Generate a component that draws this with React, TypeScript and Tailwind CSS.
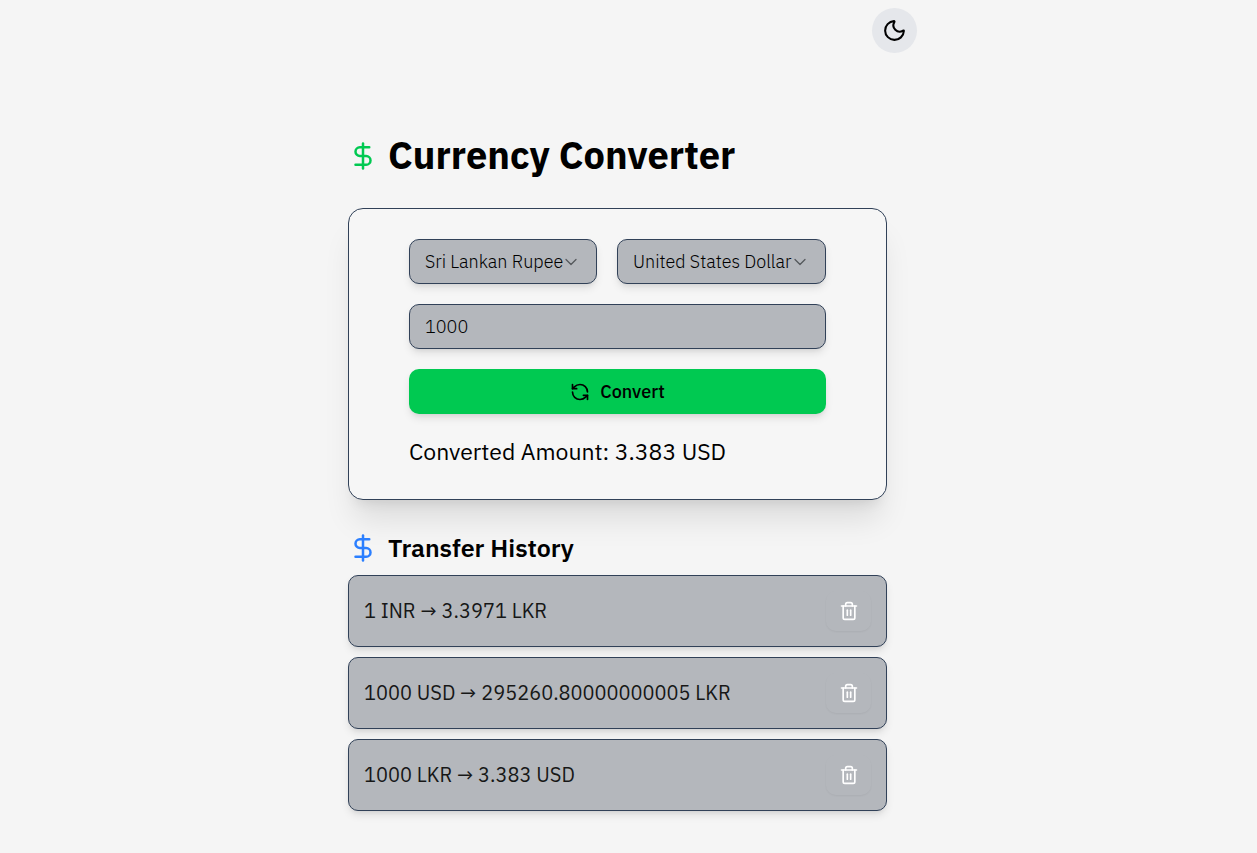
import { useState } from "react";
import { ChevronDown, DollarSign, Moon, RefreshCcw, Trash2 } from "lucide-react";

const raised = "shadow-[0_5px_8px_-1px_rgba(0,0,0,0.1),0_3px_5px_-3px_rgba(0,0,0,0.1)]";
const field = `h-[45px] rounded-[10px] border border-[#314158] bg-[#b4b7bc] text-lg font-light text-black outline-none ${raised}`;

function CurrencySelect({ label, value, className }: { label: string; value: string; className: string }) {
  return (
    <div className={`relative ${className}`}>
      <select aria-label={label} defaultValue={value} className={`${field} w-full appearance-none pl-[15px] pr-6`}>
        <option>Sri Lankan Rupee</option>
        <option>United States Dollar</option>
        <option>Indian Rupee</option>
      </select>
      <ChevronDown size={20} strokeWidth={1.5} className="pointer-events-none absolute right-4 top-[13px] text-[#55585c]" />
    </div>
  );
}

export default function App() {
  const [history, setHistory] = useState([
    "1 INR → 3.3971 LKR",
    "1000 USD → 295260.80000000005 LKR",
    "1000 LKR → 3.383 USD",
  ]);

  return (
    <div className="min-h-screen bg-[#f5f5f5] px-4 pt-2 pb-[42px] font-['IBM_Plex_Sans','Noto_Sans',sans-serif] text-black">
      <div className="mx-auto flex max-w-[577px] justify-end">
        <button aria-label="Toggle dark mode" className="flex size-[45px] items-center justify-center rounded-full bg-[#e5e7eb]">
          <Moon size={25} />
        </button>
      </div>
      <main className="mx-auto max-w-[561px] pt-[73px] pr-[22px]">
        <h1 className="flex h-[60px] items-center gap-[10px] text-[38px] leading-[45px] font-bold">
          <DollarSign size={30} className="text-[#00c951]" />
          <span className="pb-1">Currency Converter</span>
        </h1>
        <section className="mt-[22px] rounded-[15px] border border-[#314158] bg-[#f6f6f6] px-[60px] pt-[30px] pb-[30px] shadow-[0_25px_31px_-6px_rgba(0,0,0,0.1),0_10px_13px_-8px_rgba(0,0,0,0.1)]">
          <form className="flex flex-col gap-5" onSubmit={(e) => e.preventDefault()}>
            <div className="flex gap-5">
              <CurrencySelect label="From" value="Sri Lankan Rupee" className="w-[188px]" />
              <CurrencySelect label="To" value="United States Dollar" className="flex-1" />
            </div>
            <input aria-label="Amount" defaultValue="1000" className={`${field} w-full px-[15px]`} />
            <button className={`flex h-[45px] items-center justify-center gap-[10px] rounded-[10px] bg-[#00c951] text-lg font-medium ${raised}`}>
              <RefreshCcw size={20} />
              Convert
            </button>
          </form>
          <p className="mt-5 h-[35px] text-[23px] leading-[35px]">Converted Amount: 3.383 USD</p>
        </section>
        <h2 className="mt-[30px] flex h-[36px] items-center gap-[10px] text-[25px] font-semibold">
          <DollarSign size={30} className="text-[#2b7fff]" />
          Transfer History
        </h2>
        <ul className="mt-[9px] flex flex-col gap-[10px]">
          {history.map((item) => (
            <li key={item} className={`flex h-[72px] items-center justify-between rounded-[10px] border border-[#314158] bg-[#b4b7bc] px-[15px] text-xl text-[#171717] ${raised}`}>
              {item}
              <button
                aria-label={`Delete ${item}`}
                onClick={() => setHistory(history.filter((h) => h !== item))}
                className="flex h-10 w-[45px] items-center justify-center rounded-[10px] text-white shadow-xs"
              >
                <Trash2 size={20} />
              </button>
            </li>
          ))}
        </ul>
      </main>
    </div>
  );
}
